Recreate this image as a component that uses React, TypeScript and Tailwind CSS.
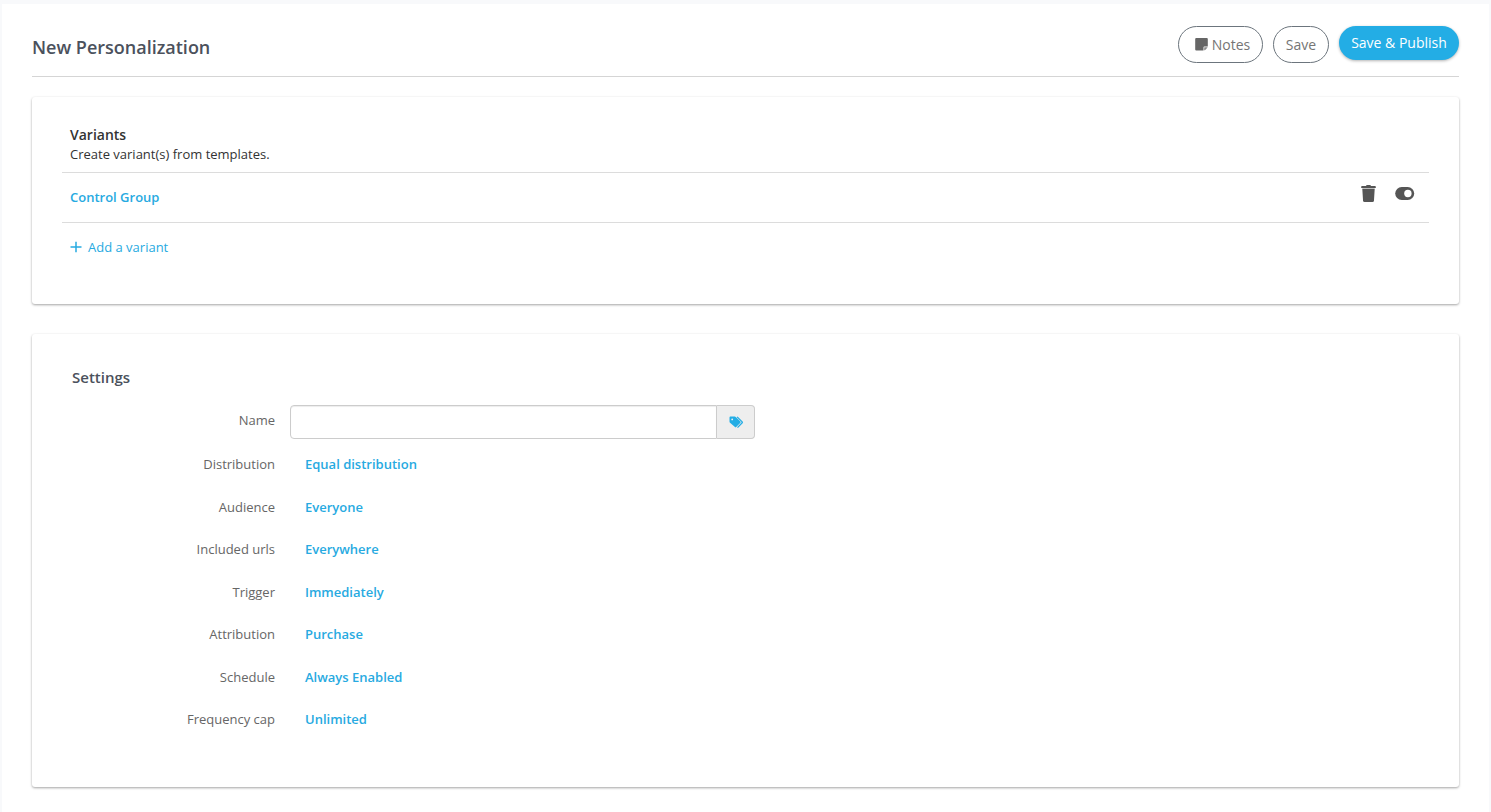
import type { ReactNode } from "react";

const settings = [
  { label: "Distribution", value: "Equal distribution" },
  { label: "Audience", value: "Everyone" },
  { label: "Included urls", value: "Everywhere" },
  { label: "Trigger", value: "Immediately" },
  { label: "Attribution", value: "Purchase" },
  { label: "Schedule", value: "Always Enabled" },
  { label: "Frequency cap", value: "Unlimited" },
];

function NoteIcon() {
  return (
    <svg width="13" height="13" viewBox="0 0 13 13" className="shrink-0">
      <path
        fill="#666"
        d="M1.2 0h10.600a1 1 0 0 1 1 1v7.500H9.400a.9.9 0 0 0-.9.900v3.200H1.200a1 1 0 0 1-1-1V1A1 1 0 0 1 1.200 0z"
      />
      <path fill="#8a8a8a" d="M9.200 12.300V9.500a.3.3 0 0 1 .3-.3h3q0 .4-.4.800l-1.900 1.900q-.4.400-1 .4z" />
    </svg>
  );
}

function TrashIcon() {
  return (
    <svg width="15" height="18" viewBox="0 0 15 18">
      <path
        fill="#555"
        d="M5.2.5Q5.4 0 6 0h3q.6 0 .8.5l.2.5h4q.8 0 .8.800v1.200H.2V1.800q0-.8.8-.8h4z"
      />
      <path fill="#bbb" d="M1.300 3h12.400v1H1.300z" />
      <path fill="#555" d="M1.300 4h12.400l-.7 11.500q-.1 1.500-1.500 1.500h-8q-1.400 0-1.500-1.500z" />
    </svg>
  );
}

function ToggleIcon() {
  return (
    <svg width="20" height="14" viewBox="0 0 20 14">
      <rect x="0.2" y="0" width="19" height="13" rx="6.500" fill="#555" />
      <circle cx="12.900" cy="6.500" r="3.700" fill="#fff" />
    </svg>
  );
}

function TagsIcon() {
  return (
    <svg width="15" height="13" viewBox="0 0 15 13">
      <path
        fill="#23ade5"
        fillRule="evenodd"
        d="M.5 1.500Q.5.600 1.400.600h4.300q.7 0 1.300.6l4.400 4.400q.6.600 0 1.200l-4.200 4.300q-.6.600-1.200 0L1 6.800Q.5 6.300.5 5.500zM3.200 2.500a.9.900 0 1 0 0 1.800a.9.900 0 1 0 0-1.800z"
      />
      <path
        fill="none"
        stroke="#23ade5"
        strokeWidth="1.300"
        d="M8.100.9l5.100 5q.4.400 0 .9l-4.700 4.800"
      />
    </svg>
  );
}

function Card({ className, children }: { className: string; children: ReactNode }) {
  return (
    <section
      className={`rounded-[3px] bg-white shadow-[0_1px_3px_rgba(0,0,0,0.2),0_1px_2px_rgba(0,0,0,0.18)] ${className}`}
    >
      {children}
    </section>
  );
}

export default function App() {
  return (
    <div className="h-[812px] overflow-hidden bg-[#f8f9fb] px-[2px] pt-1 font-['Open_Sans',sans-serif] text-[13px] leading-5 text-[#666]">
      <main className="h-full bg-white px-[30px] pt-[22px]">
        <header className="flex h-[51px] items-start justify-between border-b border-[#d5d5d5]">
          <h1 className="mt-[9px] text-[18px] leading-6 font-semibold text-[#4b515c]">New Personalization</h1>
          <div className="flex items-start gap-[10px] text-[14px]">
            <button className="flex h-[37px] w-[85px] items-center justify-center gap-1 rounded-full border border-[#6c757d] pl-1 text-[#757575]">
              <NoteIcon />
              Notes
            </button>
            <button className="h-[37px] w-[56px] rounded-full border border-[#6c757d] text-[#757575]">Save</button>
            <button className="h-[34px] w-[120px] rounded-full bg-[#23ade5] text-white shadow-[0_1px_3px_rgba(0,0,0,0.3)]">
              Save &amp; Publish
            </button>
          </div>
        </header>

        <Card className="mt-5 h-[207px] px-[30px] pt-7">
          <div className="h-[48px] border-b border-[#dcdcdc] px-2">
            <h2 className="text-[14px] leading-5 font-semibold text-[#333]">Variants</h2>
            <p className="leading-[18px] text-[#333]">Create variant(s) from templates.</p>
          </div>
          <div className="flex h-[50px] items-center justify-between border-b border-[#dcdcdc] pr-[14px] pl-2">
            <a className="mb-[2px] font-semibold text-[#27aae1]">Control Group</a>
            <div className="mb-[7px] flex items-center gap-[19px]">
              <TrashIcon />
              <ToggleIcon />
            </div>
          </div>
          <a className="mt-[14px] flex items-center gap-[6px] pl-2 text-[#27aae1]">
            <svg width="12" height="12" viewBox="0 0 12 12">
              <path d="M6 0.700v10.600M0.500 6h11" stroke="#27aae1" strokeWidth="1.500" />
            </svg>
            Add a variant
          </a>
        </Card>

        <Card className="mt-[30px] h-[453px] pt-8">
          <h2 className="pl-10 text-[15px] leading-[22px] font-semibold text-[#4b515c]">Settings</h2>
          <div className="mt-[17px] flex h-[34px]">
            <label className="mr-[15px] w-[243px] pt-[5px] text-right">Name</label>
            <input className="w-[427px] rounded-l-[4px] border border-[#ccc] bg-white shadow-[inset_0_1px_1px_rgba(0,0,0,0.075)] outline-none" />
            <div className="flex w-[38px] items-center justify-center rounded-r-[4px] border border-l-0 border-[#ccc] bg-[#eee] pl-[2px]">
              <TagsIcon />
            </div>
          </div>
          <dl className="mt-[15px]">
            {settings.map(({ label, value }) => (
              <div key={label} className="flex h-[42.5px]">
                <dt className="mr-[30px] w-[243px] text-right">{label}</dt>
                <dd className="font-semibold text-[#27aae1]">{value}</dd>
              </div>
            ))}
          </dl>
        </Card>
      </main>
    </div>
  );
}
